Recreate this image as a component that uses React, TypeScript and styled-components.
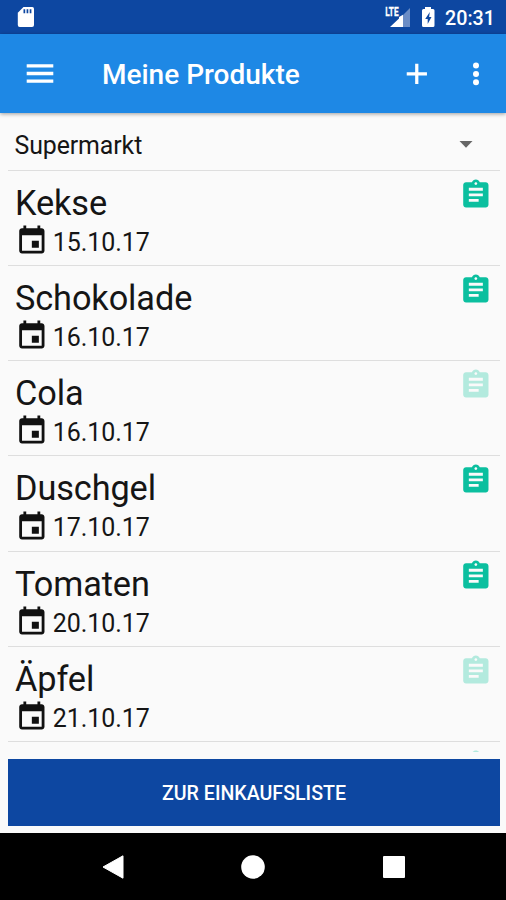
import React from 'react';
import styled, { createGlobalStyle } from 'styled-components';

const GlobalStyle = createGlobalStyle`
  *, *::before, *::after { box-sizing: border-box; }
  html, body { margin: 0; background: #000; }
  svg { display: block; flex: none; }
`;

const Screen = styled.div`
  display: flex;
  flex-direction: column;
  width: 506px;
  height: 900px;
  overflow: hidden;
  background: #fafafa;
  color: #151515;
  font-family: Roboto, sans-serif;
`;

const StatusBar = styled.header`
  flex: none;
  display: flex;
  align-items: center;
  height: 34px;
  padding: 0 11px 0 17px;
  background: #0d47a1;
  color: #fff;
`;

const StatusIcons = styled.div`
  display: flex;
  align-items: center;
  margin-left: auto;
`;

const SignalGroup = styled.div`
  margin-right: 10px;
`;

const SignalGraphic = styled.svg`
  overflow: visible;
`;

const Clock = styled.time`
  width: 50px;
  margin-left: 10px;
  padding-top: 3px;
  font-size: 19.7px;
  font-weight: 500;
  line-height: 24px;
  white-space: nowrap;
`;

const Toolbar = styled.div`
  flex: none;
  display: flex;
  align-items: center;
  height: 79px;
  padding: 0 1px 0 23px;
  background: #1e88e5;
  color: #fff;
  box-shadow: 0 1px 4px rgba(0, 0, 0, 0.38);
  z-index: 1;
`;

const Title = styled.h1`
  flex: 1;
  margin: 2px 0 0 45px;
  font-size: 28px;
  font-weight: 500;
  line-height: 34px;
`;

const IconButton = styled.button<{ $width: number }>`
  display: flex;
  justify-content: center;
  width: ${({ $width }) => $width}px;
  padding: 0;
  border: 0;
  background: none;
  color: inherit;
`;

const Content = styled.main`
  flex: 1;
  min-height: 0;
  display: flex;
  flex-direction: column;
  padding: 0 6px 7.5px 8px;
`;

const Spinner = styled.div`
  flex: none;
  display: flex;
  align-items: center;
  justify-content: space-between;
  height: 56.5px;
  padding: 6px 27px 0 6.5px;
  font-size: 24.9px;
  line-height: 32px;
`;

const SpinnerLabel = styled.span`
  padding-top: 3px;
  letter-spacing: -0.1px;
`;

const ProductList = styled.ul`
  flex: 1;
  min-height: 0;
  margin: 0 0 6.5px;
  padding: 0;
  overflow: hidden;
  list-style: none;
`;

const ProductRow = styled.li`
  display: flex;
  justify-content: space-between;
  height: 95.25px;
  padding: 8px 7.5px 0 6.5px;
  border-top: 1.5px solid #dedede;
`;

const NextRow = styled(ProductRow)`
  justify-content: flex-end;
`;

const ProductName = styled.div`
  margin-top: 2px;
  padding-left: 0.5px;
  font-size: 34.3px;
  line-height: 44px;
  letter-spacing: -0.1px;
`;

const DateLine = styled.div`
  display: flex;
  align-items: center;
  gap: 4.5px;
  margin-top: -2.5px;
  font-size: 25px;
  line-height: 34px;
`;

const DateText = styled.span`
  padding-top: 3.5px;
  letter-spacing: -0.05px;
`;

const ListButton = styled.button`
  flex: none;
  height: 67px;
  padding: 3px 0 0;
  border: 0;
  background: #0d47a1;
  color: #fff;
  font: 500 19.6px/24px Roboto, sans-serif;
`;

const NavBar = styled.nav`
  flex: none;
  display: grid;
  grid-template-columns: repeat(3, 140.6px);
  justify-content: center;
  align-items: center;
  justify-items: center;
  height: 67px;
  padding-left: 0.5px;
  background: #000;
`;

const Clipboard = styled.svg<{ $active: boolean }>`
  width: 33.7px;
  height: 33.7px;
  margin-top: -0.8px;
  fill: ${({ $active }) => ($active ? '#0bbf9f' : '#b3eade')};
`;

const products = [
  { name: 'Kekse', date: '15.10.17', listed: true },
  { name: 'Schokolade', date: '16.10.17', listed: true },
  { name: 'Cola', date: '16.10.17', listed: false },
  { name: 'Duschgel', date: '17.10.17', listed: true },
  { name: 'Tomaten', date: '20.10.17', listed: true },
  { name: 'Äpfel', date: '21.10.17', listed: false },
];

const SdCardIcon = () => (
  <svg width="18" height="22" viewBox="0 0 18 22">
    <path fill="#fff" d="M6.5 1H15.3Q17 1 17 2.7V19Q17 21 15 21H2.7Q.8 21 .8 19V6.8Z" />
    <path fill="#0d47a1" d="M6.5 3.3h1.7v4H6.5zM9.6 3.3h1.7v4H9.6zM12.7 3.3h1.7v4h-1.7z" />
  </svg>
);

const SignalIcon = () => (
  <SignalGraphic width="26" height="22" viewBox="0 0 26 22">
    <path fill="#6b8dc6" d="M25 2V21H18V9Z" />
    <path fill="#fff" d="M5 21 14 12.5V11L18 8.7V21Z" />
    <path fill="#0d47a1" d="M0 0h14v11.5H0z" />
    <text x="0.3" y="10.4" fill="#fff" stroke="#fff" strokeWidth="0.3" fontFamily="Roboto" fontSize="12.3" fontWeight="700" textLength="13.2" lengthAdjust="spacingAndGlyphs">LTE</text>
  </SignalGraphic>
);

const BatteryIcon = () => (
  <svg width="14" height="22" viewBox="0 0 14 22">
    <path fill="#fff" d="M4 1h6v2h2Q13.5 3 13.5 4.5V19.5Q13.5 21 12 21H2.5Q1 21 1 19.5V4.5Q1 3 2.5 3H4Z" />
    <path fill="#0d47a1" d="M8.8 6 4.2 13H6.7V18L10.5 11H8.1Z" />
  </svg>
);

const EventIcon = () => (
  <svg width="33.7" height="33.7" viewBox="0 0 24 24">
    <path fill="#111" d="M17 12h-5v5h5v-5zM16 1v2H8V1H6v2H5c-1.11 0-1.99.9-1.99 2L3 19c0 1.1.89 2 2 2h14c1.1 0 2-.9 2-2V5c0-1.1-.9-2-2-2h-1V1h-2zm3 18H5V8h14v11z" />
  </svg>
);

const AssignmentIcon = ({ active }: { active: boolean }) => (
  <Clipboard viewBox="0 0 24 24" $active={active}>
    <path d="M19 3h-4.18C14.4 1.84 13.3 1 12 1c-1.3 0-2.4.84-2.82 2H5c-1.1 0-2 .9-2 2v14c0 1.1.9 2 2 2h14c1.1 0 2-.9 2-2V5c0-1.1-.9-2-2-2zm-7 0c.55 0 1 .45 1 1s-.45 1-1 1-1-.45-1-1 .45-1 1-1zm2 14H7v-2h7v2zm3-4H7v-2h10v2zm0-4H7V7h10v2z" />
  </Clipboard>
);

export default function App() {
  return (
    <>
      <GlobalStyle />
      <Screen>
        <StatusBar>
          <SdCardIcon />
          <StatusIcons>
            <SignalGroup>
              <SignalIcon />
            </SignalGroup>
            <BatteryIcon />
            <Clock>20:31</Clock>
          </StatusIcons>
        </StatusBar>
        <Toolbar>
          <IconButton $width={34} aria-label="Menü">
            <svg width="34" height="34" viewBox="0 0 34 34">
              <path fill="#fff" d="M3.7 7.2h26.6v3.4H3.7zM3.7 14.8h26.6v3.4H3.7zM3.7 22.4h26.6v3.4H3.7z" />
            </svg>
          </IconButton>
          <Title>Meine Produkte</Title>
          <IconButton $width={59} aria-label="Hinzufügen">
            <svg width="33.7" height="33.7" viewBox="0 0 24 24">
              <path fill="#fff" d="M19.2 13.1h-6.1v6.1h-2.3v-6.1H4.8v-2.3h6V4.8h2.3v6h6.1z" />
            </svg>
          </IconButton>
          <IconButton $width={59} aria-label="Mehr">
            <svg width="34" height="34" viewBox="0 0 34 34" fill="#fff">
              <circle cx="17" cy="8.5" r="3" />
              <circle cx="17" cy="16.9" r="3" />
              <circle cx="17" cy="25.3" r="3" />
            </svg>
          </IconButton>
        </Toolbar>
        <Content>
          <Spinner>
            <SpinnerLabel>Supermarkt</SpinnerLabel>
            <svg width="14" height="7" viewBox="0 0 14 7">
              <path fill="#666" d="M.5 0h13L7 6.8z" />
            </svg>
          </Spinner>
          <ProductList>
            {products.map(({ name, date, listed }) => (
              <ProductRow key={name}>
                <div>
                  <ProductName>{name}</ProductName>
                  <DateLine>
                    <EventIcon />
                    <DateText>{date}</DateText>
                  </DateLine>
                </div>
                <AssignmentIcon active={listed} />
              </ProductRow>
            ))}
            <NextRow>
              <AssignmentIcon active={false} />
            </NextRow>
          </ProductList>
          <ListButton>ZUR EINKAUFSLISTE</ListButton>
        </Content>
        <NavBar>
          <svg width="24" height="26" viewBox="0 0 24 26">
            <path fill="#fff" d="M22 1.8V24.2L2 13Z" stroke="#fff" strokeWidth="1" strokeLinejoin="round" />
          </svg>
          <svg width="24" height="24" viewBox="0 0 24 24">
            <circle cx="12" cy="12" r="11.8" fill="#fff" />
          </svg>
          <svg width="22" height="22" viewBox="0 0 22 22">
            <rect width="22" height="22" rx="1" fill="#fff" />
          </svg>
        </NavBar>
      </Screen>
    </>
  );
}
